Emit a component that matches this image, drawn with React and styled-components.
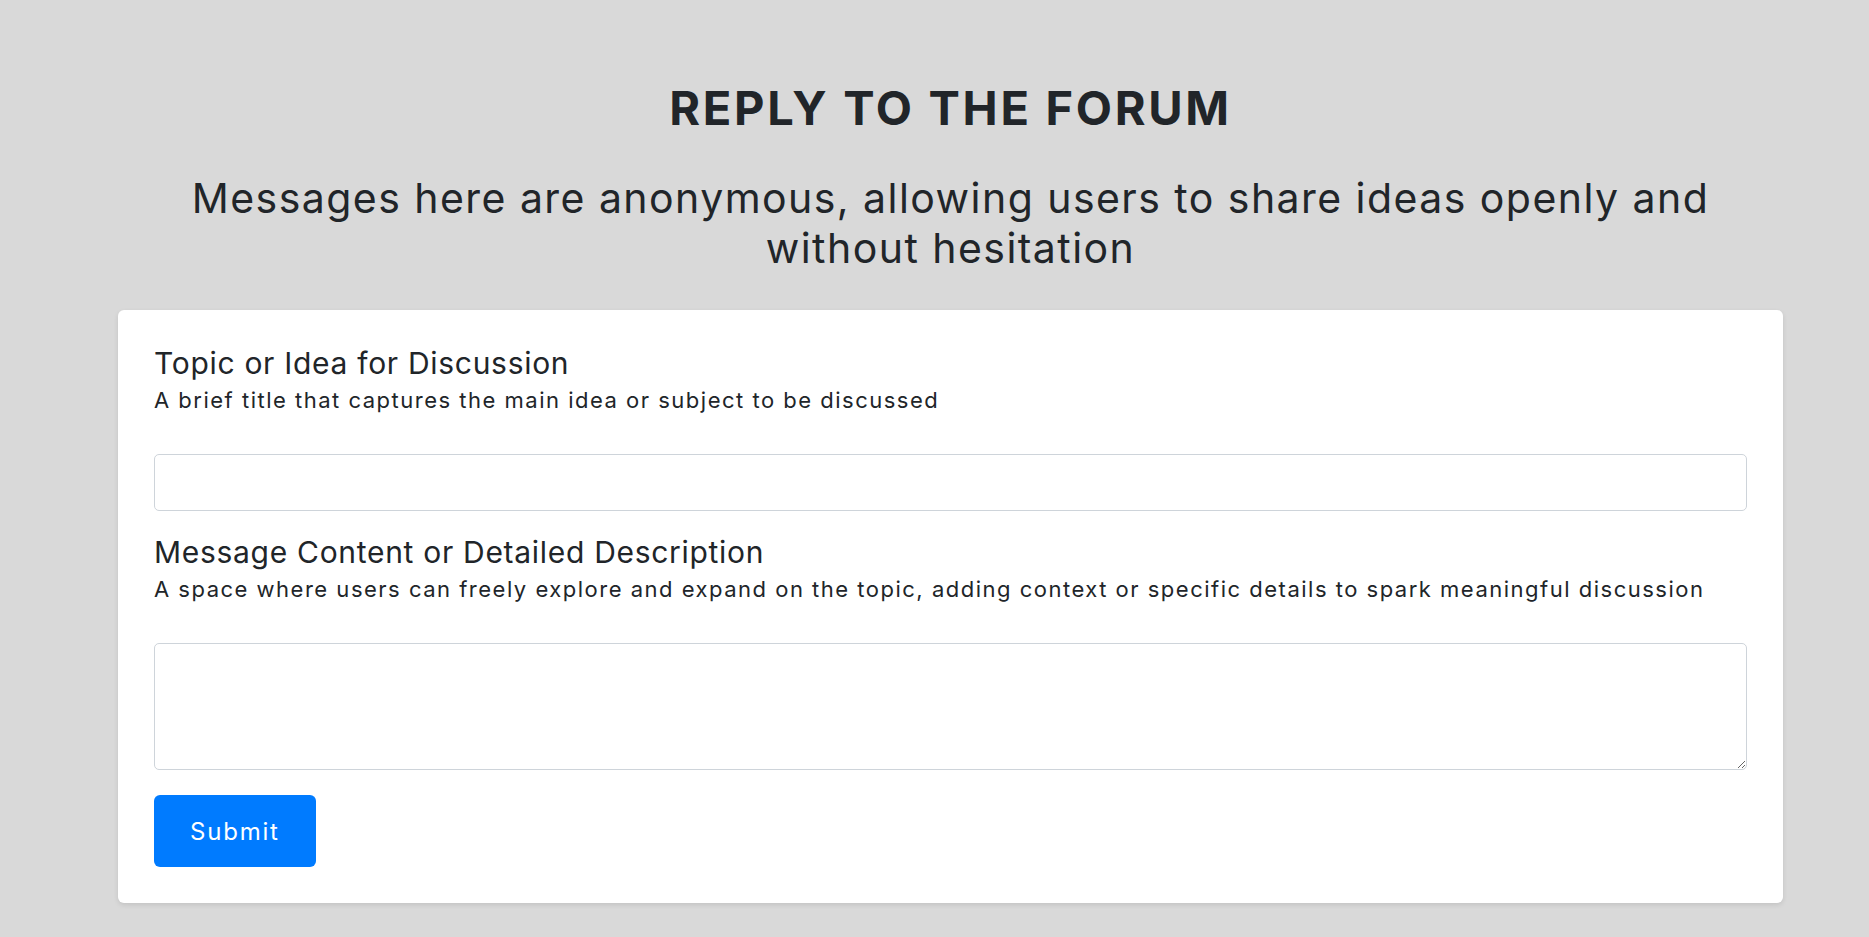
import React from "react";
import styled, { createGlobalStyle } from "styled-components";

const GlobalStyle = createGlobalStyle`
  * { box-sizing: border-box; }
  html, body { margin: 0; padding: 0; }
  body {
    background: #d9d9d9;
    font-family: Inter, "Noto Sans", sans-serif;
    color: #212529;
  }
`;

const Page = styled.main`
  padding: 80px 86px 40px 118px;
  display: flex;
  flex-direction: column;
  align-items: stretch;
`;

const Title = styled.h1`
  margin: 0;
  text-align: center;
  font-size: 47px;
  line-height: 56px;
  font-weight: 700;
  letter-spacing: 2.7px;
`;

const Subtitle = styled.p`
  margin: 37px 0 37px;
  text-align: center;
  font-size: 41px;
  line-height: 50px;
  font-weight: 400;
  letter-spacing: 1.45px;
  padding: 0 50px;
`;

const Card = styled.form`
  background: #fff;
  border-radius: 6px;
  box-shadow: 0 2px 5px rgba(0, 0, 0, 0.1);
  padding: 35px 36px 36px;
  display: flex;
  flex-direction: column;
`;

const Field = styled.div`
  display: flex;
  flex-direction: column;
  margin-top: ${(p) => (p.$first ? "0" : "23px")};
`;

const Label = styled.label`
  font-size: 30px;
  line-height: 36px;
  font-weight: 400;
  letter-spacing: 0.7px;
`;

const Hint = styled.span`
  margin-top: 4px;
  font-size: 22px;
  line-height: 30px;
  font-weight: 400;
  letter-spacing: 1.5px;
`;

const TextInput = styled.input`
  margin-top: 39px;
  height: 57px;
  width: 100%;
  border: 1px solid #ced4da;
  border-radius: 5px;
  padding: 6px 12px;
  font: inherit;
  font-size: 20px;
  background: #fff;
  outline: none;
`;

const TextArea = styled.textarea`
  margin-top: 39px;
  height: 127px;
  width: 100%;
  border: 1px solid #ced4da;
  border-radius: 5px;
  padding: 6px 12px;
  font: inherit;
  font-size: 20px;
  background: #fff;
  outline: none;
  display: block;
`;

const SubmitButton = styled.button`
  margin-top: 25px;
  align-self: flex-start;
  height: 72px;
  min-width: 161px;
  padding: 0 36px;
  border: none;
  border-radius: 6px;
  background: #007bff;
  color: #fff;
  font-family: inherit;
  font-size: 24px;
  font-weight: 400;
  letter-spacing: 1.8px;
  cursor: pointer;
`;

export default function App() {
  return (
    <>
      <GlobalStyle />
      <Page>
        <Title>REPLY TO THE FORUM</Title>
        <Subtitle>
          Messages here are anonymous, allowing users to share ideas openly and without hesitation
        </Subtitle>
        <Card onSubmit={(e) => e.preventDefault()}>
          <Field $first>
            <Label htmlFor="topic">Topic or Idea for Discussion</Label>
            <Hint>A brief title that captures the main idea or subject to be discussed</Hint>
            <TextInput id="topic" type="text" />
          </Field>
          <Field>
            <Label htmlFor="message">Message Content or Detailed Description</Label>
            <Hint>
              A space where users can freely explore and expand on the topic, adding context or specific details to spark meaningful discussion
            </Hint>
            <TextArea id="message" />
          </Field>
          <SubmitButton type="submit">Submit</SubmitButton>
        </Card>
      </Page>
    </>
  );
}
